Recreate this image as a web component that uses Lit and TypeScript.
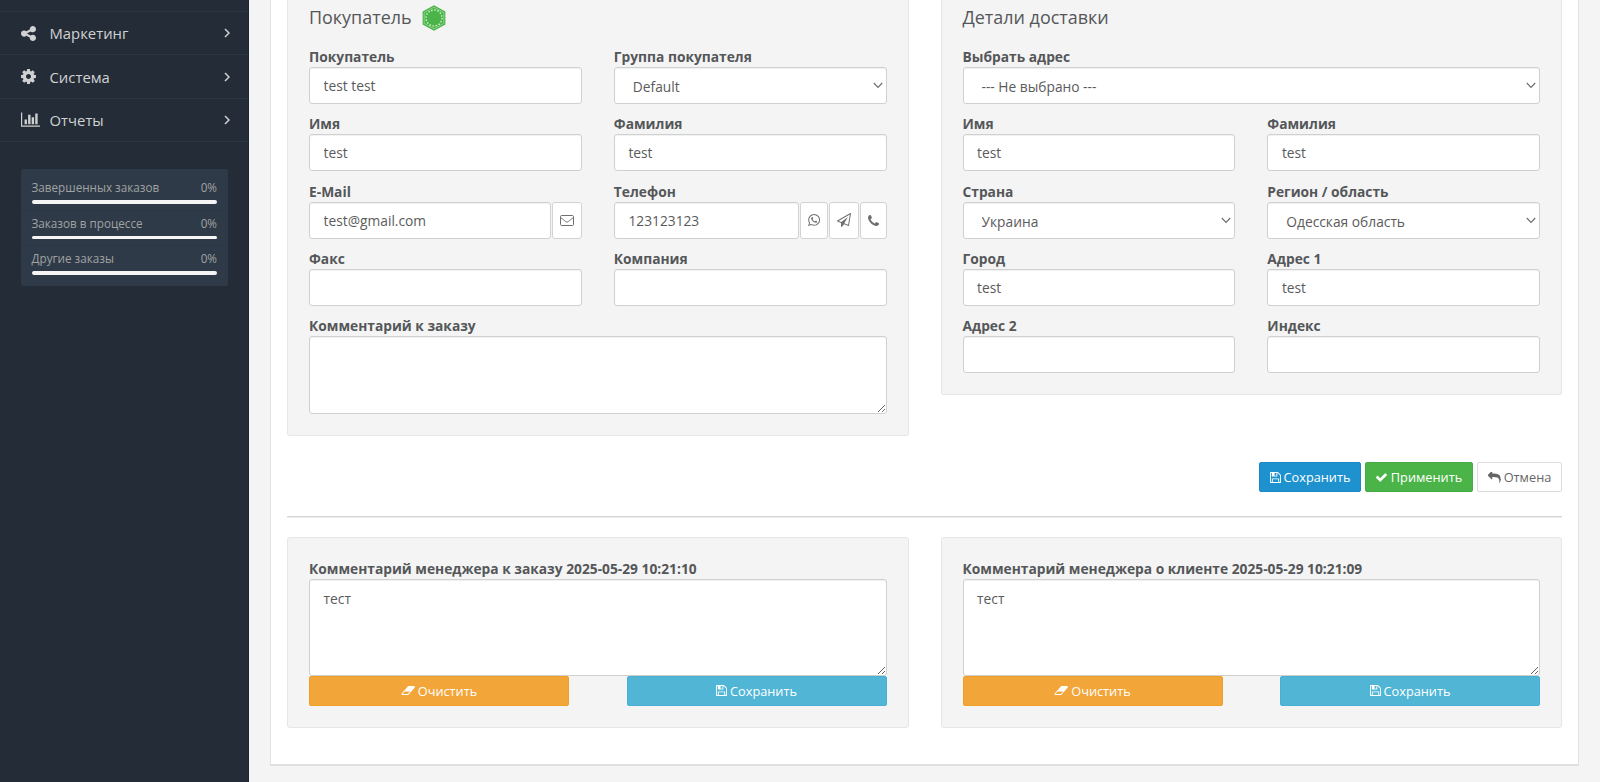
import { LitElement, html, css, svg, nothing } from "lit";
import { customElement, property } from "lit/decorators.js";

const ICONS: Record<string, { box: string; body: unknown }> = {
  share: {
    box: "128 128 1536 1536",
    body: svg`<path d="M1344 1024q133 0 226.500 93.500t93.500 226.500-93.500 226.500-226.500 93.500-226.500-93.500-93.500-226.500q0-12 2-34l-360-180q-92 86-218 86-133 0-226.500-93.500t-93.500-226.500 93.500-226.500 226.500-93.500q126 0 218 86l360-180q-2-22-2-34 0-133 93.500-226.500t226.500-93.500 226.500 93.500 93.500 226.500-93.500 226.500-226.500 93.500q-126 0-218-86l-360 180q2 22 2 34t-2 34l360 180q92-86 218-86z"/>`,
  },
  cog: {
    box: "128 128 1536 1536",
    body: svg`<path d="M1152 896q0-106-75-181t-181-75-181 75-75 181 75 181 181 75 181-75 75-181zm512-109v222q0 12-8 23t-20 13l-185 28q-19 54-39 91 35 50 107 138 10 12 10 25t-9 23q-27 37-99 108t-94 71q-12 0-26-9l-138-108q-44 23-91 38-16 136-29 186-7 28-36 28h-222q-14 0-24.500-8.500t-11.500-21.500l-28-184q-49-16-90-37l-141 107q-10 9-25 9-14 0-25-11-126-114-165-168-7-10-7-23 0-12 8-23 15-21 51-66.500t54-70.500q-27-50-41-99l-183-27q-13-2-21-12.500t-8-23.500v-222q0-12 8-23t19-13l186-28q14-46 39-92-40-57-107-138-10-12-10-24 0-10 9-23 26-36 98.500-107.500t94.500-71.500q13 0 26 10l138 107q44-23 91-38 16-136 29-186 7-28 36-28h222q14 0 24.500 8.500t11.500 21.500l28 184q49 16 90 37l142-107q9-9 24-9 13 0 25 10 129 119 165 170 7 8 7 22 0 12-8 23-15 21-51 66.500t-54 70.500q26 50 41 98l183 28q13 2 21 12.500t8 23.500z"/>`,
  },
  chart: {
    box: "0 128 2048 1536",
    body: svg`<path d="M640 896v512h-256v-512zM1024 384v1024h-256v-1024zM2048 1536v128h-2048v-1536h128v1408zM1408 640v768h-256v-768zM1792 256v1152h-256v-1152z"/>`,
  },
  right: {
    box: "0 0 6 10",
    body: svg`<path d="M1 1l4 4-4 4" fill="none" stroke="currentColor" stroke-width="1.500"/>`,
  },
  down: {
    box: "0 0 10 7",
    body: svg`<path d="M.8 1l4.200 4.400L9.200 1" fill="none" stroke="currentColor" stroke-width="1.100"/>`,
  },
  save: {
    box: "128 128 1536 1536",
    body: svg`<path d="M512 1536h768v-384h-768v384zm896 0h128v-896q0-14-10-38.500t-20-34.500l-281-281q-10-10-34-20t-39-10v416q0 40-28 68t-68 28h-576q-40 0-68-28t-28-68v-416h-128v1280h128v-416q0-40 28-68t68-28h832q40 0 68 28t28 68v416zm-384-928v-320q0-13-9.500-22.500t-22.500-9.500h-192q-13 0-22.500 9.500t-9.500 22.500v320q0 13 9.500 22.500t22.500 9.500h192q13 0 22.500-9.500t9.500-22.500zm640 32v928q0 40-28 68t-68 28h-1344q-40 0-68-28t-28-68v-1344q0-40 28-68t68-28h928q40 0 88 20t76 48l280 280q28 28 48 76t20 88z"/>`,
  },
  check: {
    box: "121 334 1550 1188",
    body: svg`<path d="M1671 566q0 40-28 68l-724 724-136 136q-28 28-68 28t-68-28l-136-136-362-362q-28-28-28-68t28-68l136-136q28-28 68-28t68 28l294 295 656-657q28-28 68-28t68 28l136 136q28 28 28 68z"/>`,
  },
  reply: {
    box: "0 128 1792 1536",
    body: svg`<path d="M1792 1120q0 166-127 451-3 7-10.500 24t-13.500 30-13 22q-12 17-28 17-15 0-23.500-10t-8.500-25q0-9 2.500-26.500t2.500-23.500q5-68 5-123 0-112-19.500-200.500t-54-153.500-89-112.500-117-78-143-43.500-162-19.500-187.500-5.500h-224v256q0 26-19 45t-45 19-45-19l-512-512q-19-19-19-45t19-45l512-512q19-19 45-19t45 19 19 45v256h224q713 0 875 403 53 134 53 333z"/>`,
  },
  eraser: {
    box: "0 256 1984 1280",
    body: svg`<path d="M960 1408l336-384h-768l-336 384h768zm1013-1077q15 34 9.500 71.500t-30.500 65.500l-896 1024q-38 44-96 44h-768q-38 0-69.500-20.500t-47.500-54.500q-15-34-9.500-71.500t30.500-65.500l896-1024q38-44 96-44h768q38 0 69.500 20.500t47.500 54.500z"/>`,
  },
  phone: {
    box: "192 128 1408 1408",
    body: svg`<path d="M1600 1240q0 27-10 70.500t-21 68.500q-21 50-122 106-94 51-186 51-27 0-53-3.500t-57.500-12.500-47-14.500-55.500-20.500-49-18q-98-35-175-83-127-79-264-216t-216-264q-48-77-83-175-3-9-18-49t-20.500-55.500-14.500-47-12.500-57.500-3.500-53q0-92 51-186 56-101 106-122 25-11 68.500-21t70.500-10q14 0 21 3 18 6 53 76 11 19 30 54t35 63.500 31 53.500q3 4 17.500 25t21.500 35.500 7 28.500q0 20-28.500 50t-62 55-62 53-28.500 46q0 9 5 22.500t8.500 20.500 14 24 11.500 19q76 137 174 235t235 174q2 1 19 11.500t24 14 20.500 8.500 22.500 5q18 0 46-28.500t53-62 55-62 50-28.500q14 0 28.500 7t35.500 21.500 25 17.500q25 15 53.500 31t63.500 35 54 30q70 35 76 53 3 7 3 21z"/>`,
  },
  mail: {
    box: "0 0 14 11",
    body: svg`<g fill="none" stroke="currentColor" stroke-width="1"><rect x=".5" y=".5" width="13" height="10" rx="1.200"/><path d="M.7 2.600C2.800 4.200 4 5.200 5.300 6.300c1.300 1 2.100 1 3.400 0C10 5.200 11.200 4.200 13.300 2.600"/></g>`,
  },
  whatsapp: {
    box: "128 122 1536 1536",
    body: svg`<path d="M1113 974q13 0 97.500 44t89.500 53q2 5 2 15 0 33-17 76-16 39-71 65.500t-102 26.500q-57 0-190-62-98-45-170-118t-148-185q-72-107-71-194v-8q3-91 74-158 24-22 52-22 6 0 18 1.500t19 1.500q19 0 26.500 6.500t15.500 27.500q8 20 33 88t25 75q0 21-34.500 57.500t-34.500 46.500q0 7 5 15 34 73 102 137 56 53 151 101 12 7 22 7 15 0 54-48.500t52-48.500zm-203 530q127 0 243.500-50t200.500-134 134-200.500 50-243.500-50-243.500-134-200.500-200.500-134-243.500-50-243.500 50-200.500 134-134 200.500-50 243.500q0 203 120 368l-79 233 242-77q158 104 345 104zm0-1382q153 0 292.500 60t240.500 161 161 240.500 60 292.500-60 292.500-161 240.500-240.500 161-292.500 60q-195 0-365-94l-417 134 136-405q-108-178-108-389 0-153 60-292.500t161-240.500 240.500-161 292.500-60z"/>`,
  },
  plane: {
    box: "0 0 1792 1792",
    body: svg`<path d="M1764 11q33 24 27 64l-256 1536q-5 29-32 45-14 8-31 8-11 0-24-5l-527-215-298 327q-18 21-47 21-14 0-23-4-19-7-30-23.500t-11-36.500v-452l-472-193q-37-14-40-55-3-39 32-59l1664-960q35-21 68 2zm-342 1499l221-1323-1434 827 336 137 863-639-478 797z"/>`,
  },
  badge: {
    box: "0 0 24 26",
    body: svg`<path d="M12 .3L23.400 6.600v12.800L12 25.700.6 19.400V6.600z"/><path d="M12 2.200L21.800 7.600v10.800L12 23.800 2.200 18.400V7.600z" fill="none" stroke="#a5dca3" stroke-width=".7"/><circle cx="12" cy="13" r="8" fill="none" stroke="#d8f0d7" stroke-width="1.300" stroke-dasharray="1.500 1.640"/>`,
  },
};

@customElement("ui-icon")
class UiIcon extends LitElement {
  @property() name = "";
  @property({ type: Number }) w = 14;
  @property({ type: Number }) h = 14;

  static styles = css`
    :host { display: inline-flex; flex: none; }
    svg { display: block; fill: currentColor; }
  `;

  render() {
    const icon = ICONS[this.name];
    return html`<svg width=${this.w} height=${this.h} viewBox=${icon.box} aria-hidden="true">${icon.body}</svg>`;
  }
}

@customElement("form-field")
class FormField extends LitElement {
  @property() label = "";
  @property() value = "";
  @property() kind = "text";
  @property({ type: Array }) actions: string[][] = [];

  static styles = css`
    :host { display: block; color: #555; }
    * { box-sizing: border-box; }
    .label { display: block; height: 20px; line-height: 19px; font-size: 13.770px; font-weight: 700; color: #545759; white-space: nowrap; }
    .row { display: flex; gap: 1px; }
    .control {
      flex: 1; min-width: 0; height: 37px; margin: 0; padding: 0 13.600px; display: block;
      border: 1px solid #cfd1d1; border-radius: 3px; background: #fff; outline: 0;
      box-shadow: inset 0 1px 1px rgba(0, 0, 0, 0.06);
      font: 13.770px "Open Sans", sans-serif; color: #5b5b5b;
    }
    .select { appearance: none; padding: 2px 30px 0 18px; }
    .pick { flex: 1; min-width: 0; display: grid; grid-template-columns: 1fr 14px; }
    .pick .control { grid-area: 1 / 1 / 2 / 3; width: 100%; }
    .pick ui-icon { grid-area: 1 / 2; align-self: center; z-index: 1; color: #6a6a6a; pointer-events: none; }
    .area { height: 78px; padding: 9px 13.600px; resize: vertical; }
    .tall { height: 97px; }
    .act {
      display: flex; align-items: center; justify-content: center; height: 37px; padding: 0;
      border: 1px solid #d2d4d4; border-radius: 3px; background: #fff; color: #707070;
    }
    .narrow { width: 28px; }
    .wide { width: 30px; }
    .slim { width: 27px; }
  `;

  control() {
    if (this.kind === "select")
      return html`<div class="pick">
        <select class="control select"><option>${this.value}</option></select>
        <ui-icon name="down" w="10" h="7"></ui-icon>
      </div>`;
    if (this.kind === "area" || this.kind === "note")
      return html`<textarea class="control area ${this.kind === "note" ? "tall" : ""}" .value=${this.value}></textarea>`;
    return html`<input class="control" .value=${this.value} />`;
  }

  render() {
    return html`
      <label class="label">${this.label}</label>
      <div class="row">
        ${this.control()}
        ${this.actions.map(
          ([icon, size, w, h]) =>
            html`<button class="act ${size}"><ui-icon name=${icon} w=${w} h=${h}></ui-icon></button>`
        )}
      </div>
    `;
  }
}

type Field = { label: string; value?: string; kind?: string; full?: boolean; actions?: string[][] };

const CUSTOMER: Field[] = [
  { label: "Покупатель", value: "test test" },
  { label: "Группа покупателя", value: "Default", kind: "select" },
  { label: "Имя", value: "test" },
  { label: "Фамилия", value: "test" },
  { label: "E-Mail", value: "test@gmail.com", actions: [["mail", "wide", "14", "11"]] },
  {
    label: "Телефон",
    value: "123123123",
    actions: [["whatsapp", "narrow", "12", "12"], ["plane", "wide", "14", "14"], ["phone", "slim", "11", "11"]],
  },
  { label: "Факс" },
  { label: "Компания" },
  { label: "Комментарий к заказу", kind: "area", full: true },
];

const SHIPPING: Field[] = [
  { label: "Выбрать адрес", value: "--- Не выбрано ---", kind: "select", full: true },
  { label: "Имя", value: "test" },
  { label: "Фамилия", value: "test" },
  { label: "Страна", value: "Украина", kind: "select" },
  { label: "Регион / область", value: "Одесская область", kind: "select" },
  { label: "Город", value: "test" },
  { label: "Адрес 1", value: "test" },
  { label: "Адрес 2" },
  { label: "Индекс" },
];

const MENU = [
  { icon: "share", w: 15, text: "Маркетинг" },
  { icon: "cog", w: 15, text: "Система" },
  { icon: "chart", w: 19, text: "Отчеты" },
];

const STATS = ["Завершенных заказов", "Заказов в процессе", "Другие заказы"];

const NOTES = [
  "Комментарий менеджера к заказу 2025-05-29 10:21:10",
  "Комментарий менеджера о клиенте 2025-05-29 10:21:09",
];

@customElement("app-root")
class AppRoot extends LitElement {
  static styles = css`
    :host {
      display: flex; height: 782px; overflow: hidden; background: #f4f4f4;
      font-family: "Open Sans", sans-serif; color: #545759;
    }
    * { box-sizing: border-box; }
    .side { width: 249px; flex: none; background: #242d37; border-right: 1px solid #1b2531; padding-top: 11px; }
    .menu { margin: 0; padding: 0; list-style: none; border-top: 1px solid #283741; }
    .item {
      display: flex; align-items: center; height: 43.400px; padding: 0 18.500px 0 21px;
      border-bottom: 1px solid #283741; color: #d0d1d2; font-size: 14.850px;
    }
    .glyph { width: 28.500px; display: flex; }
    .name { flex: 1; }
    .stats { margin: 27px 21px 0; width: 206.500px; height: 117px; padding: 6px 0 0; background: #2e3a47; border-radius: 2px; }
    .stat { height: 35.500px; padding: 4px 10.500px 0; border-bottom: 1px dotted #2a3541; font-size: 11.700px; color: #a0a2a3; }
    .stat:last-child { border-bottom: 0; }
    .line { display: flex; justify-content: space-between; height: 21px; line-height: 17px; }
    .bar { height: 3.500px; border-radius: 2px; background: #f5f5f5; }
    .panel {
      width: 1309px; flex: none; height: 766px; margin-left: 21px; padding: 0 16px;
      background: #fff; border: 1px solid #e2e2e2; border-top: 0; border-bottom: 2px solid #dfdfdf;
    }
    .cols { display: grid; grid-template-columns: 621.500px 621.500px; justify-content: space-between; align-items: start; }
    .well { background: #f4f4f4; border: 1px solid #e6e6e6; border-radius: 3px; padding: 0 21px; }
    .top { border-top: 0; border-radius: 0 0 3px 3px; }
    .title { display: flex; align-items: center; gap: 10px; height: 34px; margin: 0 0 13.400px; font-size: 17.950px; font-weight: 400; }
    .title ui-icon { color: #4bb449; margin-top: 1px; }
    .fields { display: grid; grid-template-columns: 272.700px 272.700px; justify-content: space-between; row-gap: 10.100px; padding-bottom: 21.600px; }
    .full { grid-column: 1 / 3; }
    .actions { display: flex; justify-content: flex-end; gap: 4px; margin-top: 26px; }
    .btn {
      display: flex; align-items: center; justify-content: center; gap: 3px; height: 30px; padding: 0;
      border: 1px solid; border-radius: 2px; color: #fff; font: 12.750px "Open Sans", sans-serif;
    }
    .primary { width: 102px; background: #1e91cf; border-color: #1b87c3; }
    .success { width: 108px; gap: 4px; background: #4bb449; border-color: #46ab44; }
    .plain { width: 85px; background: #fff; border-color: #dcdcdc; color: #666; }
    .rule { height: 0; margin: 24px 0 19px; border: 0; border-top: 1px solid #d5d6d6; border-bottom: 1px solid #ececec; }
    .note { padding: 20.400px 21px 21.600px; }
    .pair { display: flex; justify-content: space-between; }
    .warn { width: 260px; background: #f2a538; border-color: #f09f28; }
    .info { width: 260px; background: #51b5d6; border-color: #49b0d3; }
  `;

  fields(list: Field[]) {
    return html`<div class="fields">
      ${list.map(
        (f) => html`<form-field class=${f.full ? "full" : nothing} .label=${f.label} .value=${f.value ?? ""}
          .kind=${f.kind ?? "text"} .actions=${f.actions ?? []}></form-field>`
      )}
    </div>`;
  }

  render() {
    return html`
      <nav class="side">
        <ul class="menu">
          ${MENU.map(
            (m) => html`<li class="item">
              <span class="glyph"><ui-icon name=${m.icon} w=${m.w} h="15"></ui-icon></span>
              <span class="name">${m.text}</span>
              <ui-icon name="right" w="6" h="10"></ui-icon>
            </li>`
          )}
        </ul>
        <div class="stats">
          ${STATS.map(
            (s) => html`<div class="stat">
              <div class="line"><span>${s}</span><span>0%</span></div>
              <div class="bar"></div>
            </div>`
          )}
        </div>
      </nav>
      <main class="panel">
        <div class="cols">
          <section class="well top">
            <h3 class="title">Покупатель <ui-icon name="badge" w="24" h="26"></ui-icon></h3>
            ${this.fields(CUSTOMER)}
          </section>
          <section class="well top">
            <h3 class="title">Детали доставки</h3>
            ${this.fields(SHIPPING)}
          </section>
        </div>
        <div class="actions">
          <button class="btn primary"><ui-icon name="save" w="11" h="11"></ui-icon>Сохранить</button>
          <button class="btn success"><ui-icon name="check" w="11" h="9"></ui-icon>Применить</button>
          <button class="btn plain"><ui-icon name="reply" w="13" h="11"></ui-icon>Отмена</button>
        </div>
        <hr class="rule" />
        <div class="cols">
          ${NOTES.map(
            (n) => html`<section class="well note">
              <form-field .label=${n} .value=${"тест"} .kind=${"note"}></form-field>
              <div class="pair">
                <button class="btn warn"><ui-icon name="eraser" w="14" h="9"></ui-icon>Очистить</button>
                <button class="btn info"><ui-icon name="save" w="11" h="11"></ui-icon>Сохранить</button>
              </div>
            </section>`
          )}
        </div>
      </main>
    `;
  }
}
